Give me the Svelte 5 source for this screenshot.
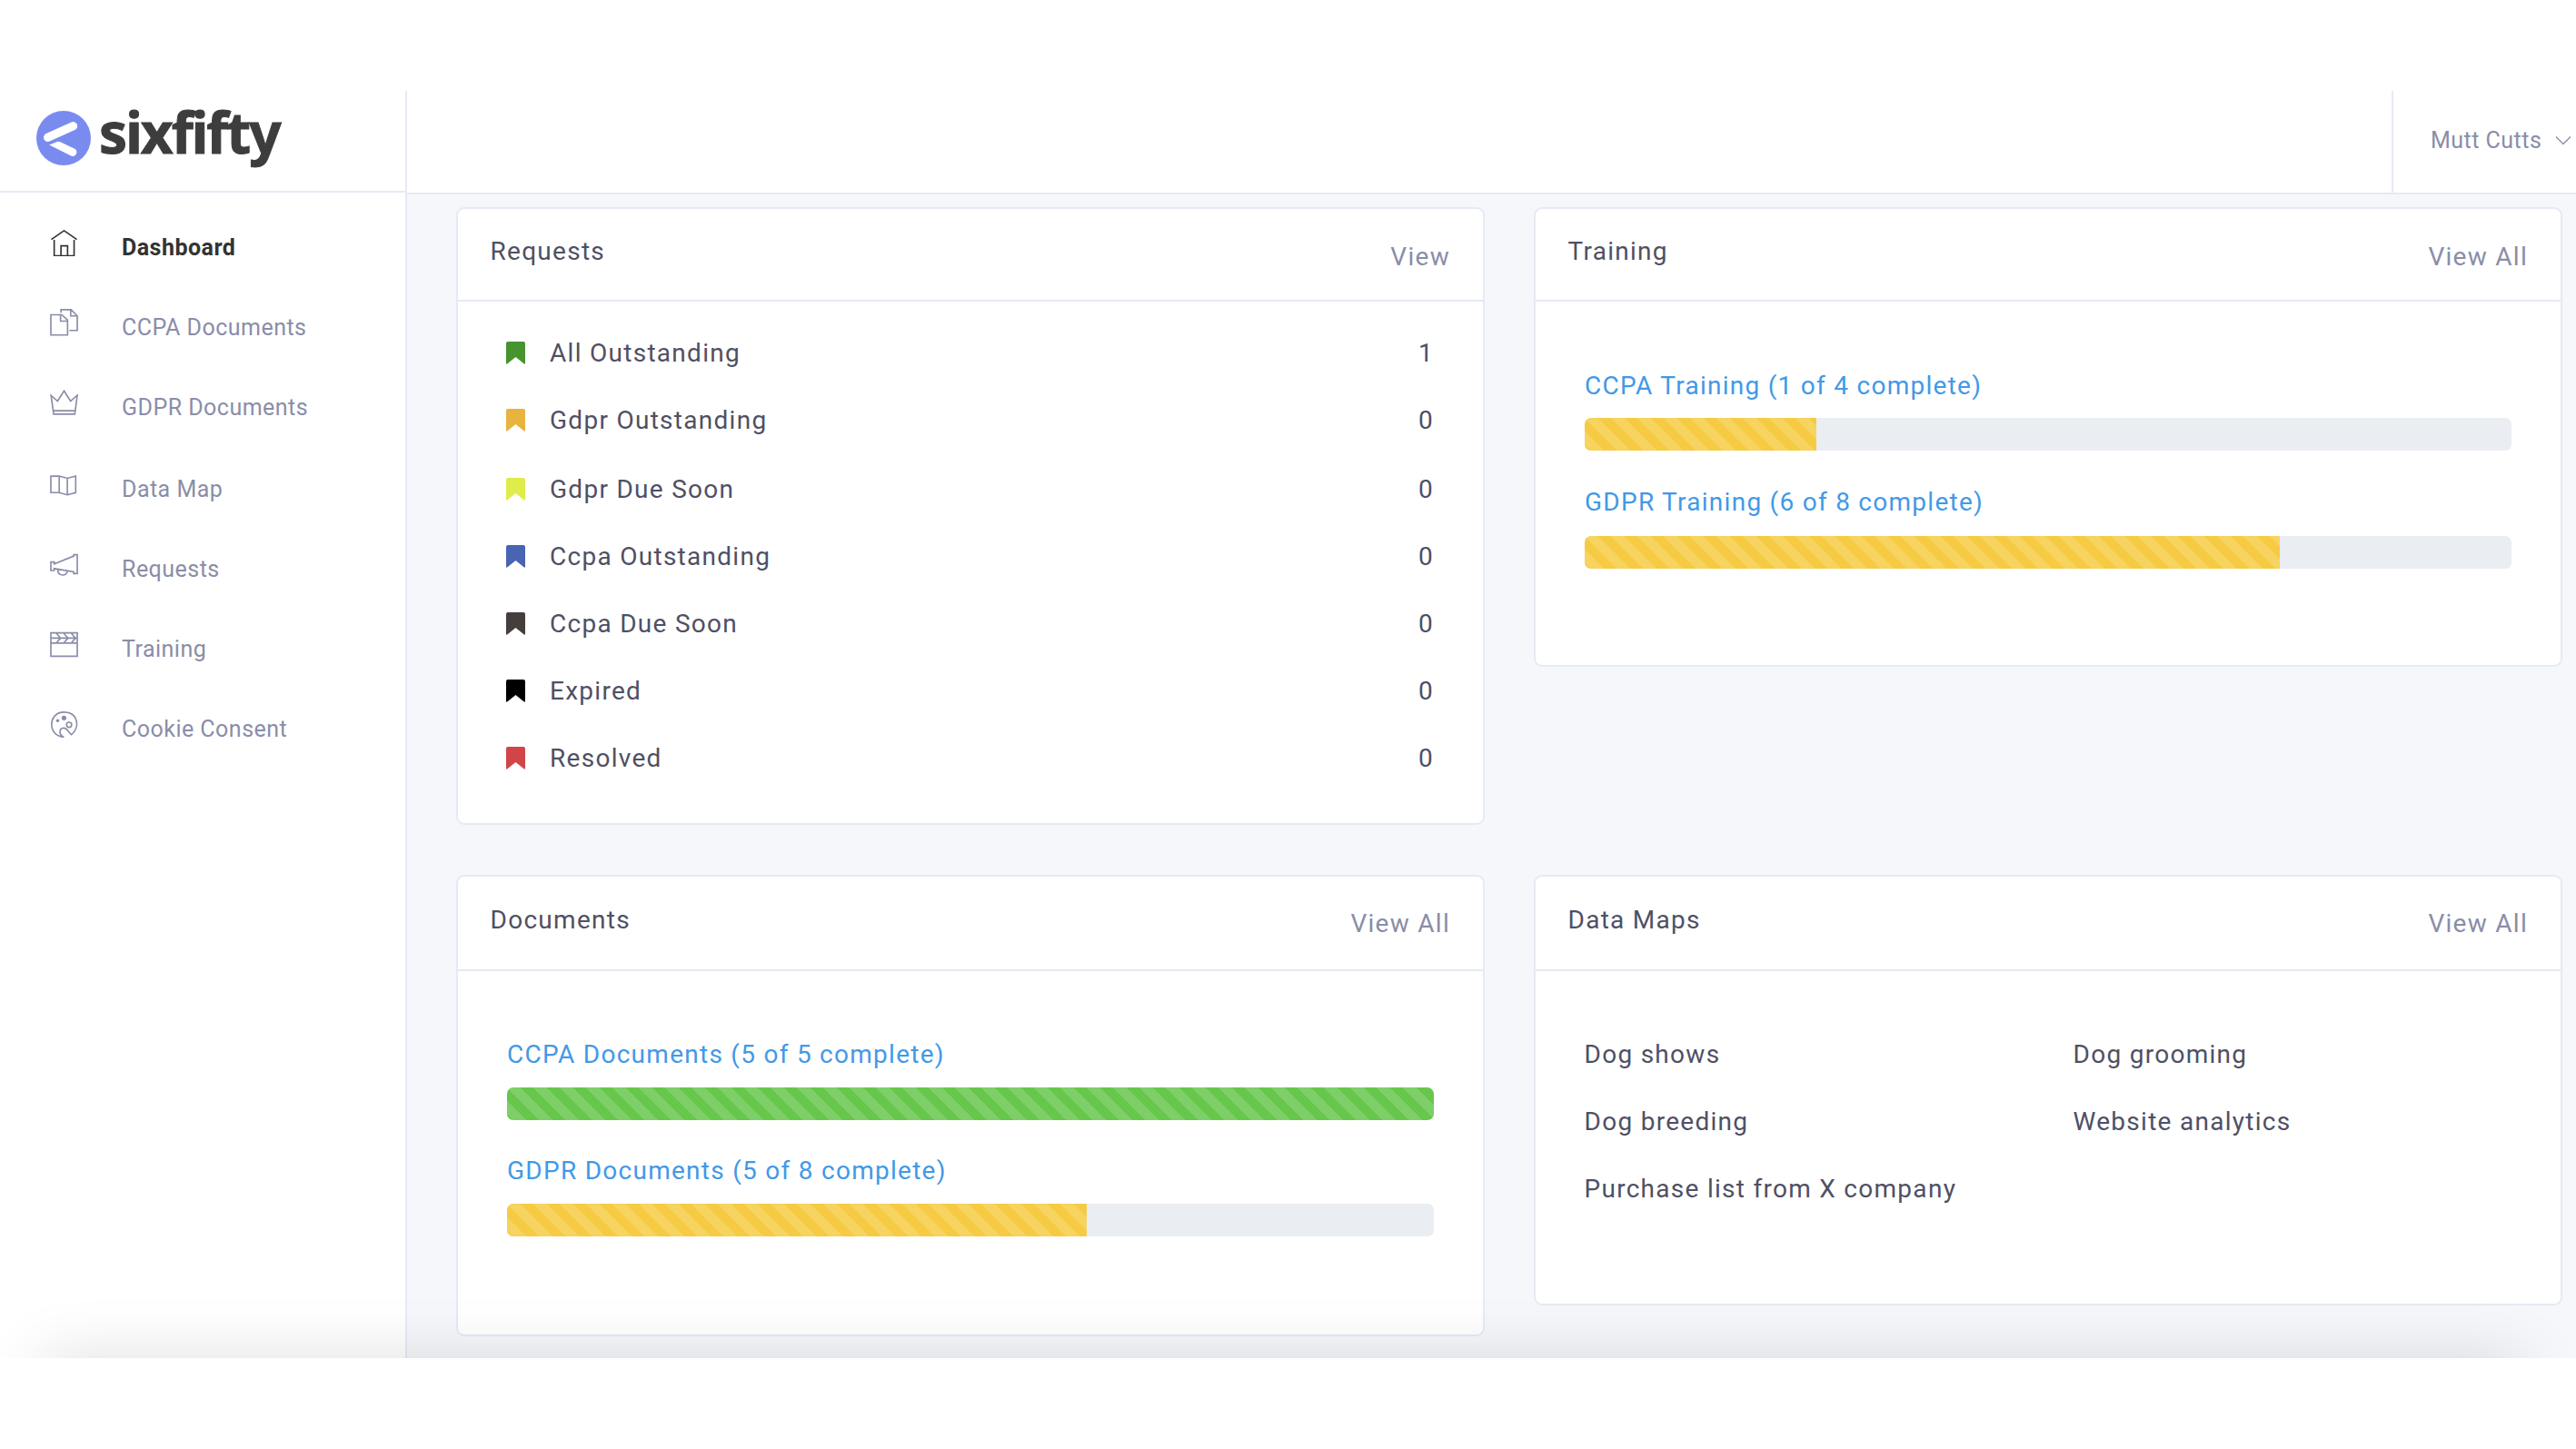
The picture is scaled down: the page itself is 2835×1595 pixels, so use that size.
<script>
  const nav = [
    { id: 'home', label: 'Dashboard', active: true },
    { id: 'docs', label: 'CCPA Documents' },
    { id: 'crown', label: 'GDPR Documents' },
    { id: 'map', label: 'Data Map' },
    { id: 'horn', label: 'Requests' },
    { id: 'clap', label: 'Training' },
    { id: 'palette', label: 'Cookie Consent' }
  ];
  const requests = [
    { label: 'All Outstanding', n: 1, color: '#47932f' },
    { label: 'Gdpr Outstanding', n: 0, color: '#e8b33f' },
    { label: 'Gdpr Due Soon', n: 0, color: '#e0ec4b' },
    { label: 'Ccpa Outstanding', n: 0, color: '#4864b2' },
    { label: 'Ccpa Due Soon', n: 0, color: '#443e3d' },
    { label: 'Expired', n: 0, color: '#000000' },
    { label: 'Resolved', n: 0, color: '#d24547' }
  ];
  const training = [
    { label: 'CCPA Training (1 of 4 complete)', pct: 25 },
    { label: 'GDPR Training (6 of 8 complete)', pct: 75 }
  ];
  const documents = [
    { label: 'CCPA Documents (5 of 5 complete)', pct: 100 },
    { label: 'GDPR Documents (5 of 8 complete)', pct: 62.5 }
  ];
  const maps = ['Dog shows', 'Dog grooming', 'Dog breeding', 'Website analytics', 'Purchase list from X company'];
</script>

{#snippet head(title, link)}
  <header class="card-head"><h2>{title}</h2><a class="view">{link}</a></header>
{/snippet}

{#snippet bars(items)}
  <div class="bars">
    {#each items as b}
      <a class="bar-label">{b.label}</a>
      <div class="track"><div class="fill" class:done={b.pct === 100} style:width="{b.pct}%"></div></div>
    {/each}
  </div>
{/snippet}

<div class="app">
  <aside>
    <div class="brand">
      <svg class="mark" viewBox="0 0 60 60">
        <circle cx="30" cy="30" r="30" fill="#7a8bf0" />
        <path d="M12.700 29.300 40.500 16.800" stroke="#fff" stroke-width="9.400" stroke-linecap="round" />
        <path d="M14.200 37.500 23 34q1.400-.6 2.800 0l15.900 7.400a4.300 4.300 0 0 1-3.600 8.200z" fill="#fff" />
      </svg>
      <span class="word">sixfifty</span>
    </div>
    <nav>
      {#each nav as item}
        <a class="item {item.id}" class:active={item.active}>
          <svg class="icon" viewBox="0 0 32 32">
            {#if item.id === 'home'}
              <path d="M1.500 13 16 3l14.500 10M4.800 13.500v18h22.600v-18M12.500 31.500V20.200h7.500v11.300" />
            {:else if item.id === 'docs'}
              <path d="M1 7.700h12.500l6.500 6v17H1zM12 8v7h8M12.500 5.500V2H24l7 7v16.500h-9M23.500 2.500V9H31" />
            {:else if item.id === 'crown'}
              <path d="M1.200 8.500 4.200 29.800h24L31 8.500 23.400 15 16 3.300 8.600 15zM3.700 26h25" />
            {:else if item.id === 'map'}
              <path d="M1 7.300h9.500l9.200 2.500 9.500-2.500v18.800l-9.500 2.500-9.200-2.500H1zM10.500 7.300v18.800M19.700 9.800v18.800" />
            {:else if item.id === 'horn'}
              <path d="M1 14h3.800v2.300L27 7.300V5.800h4v21.400h-4v-2L4.800 21.500v2.200H1zM8.800 22.500c0 8 10.400 8.500 10.800 1.800" />
            {:else if item.id === 'clap'}
              <path d="M1 3.800h30v26.500H1zM1 9.700h30M1 15.400h30M7 3.800l5 5.900-5 5.700M15.500 3.800l5 5.900-5 5.700M24 3.800l5 5.900-5 5.700" />
            {:else}
              <path d="M15.800 31.300C-2.800 30.800-2.800 3 16 3c16 0 18.600 17.500 8.300 25.500-3.300-2.500-4.300-7.500-9-7.500-5.300 0-5.300 8.300.5 10.300z" />
              <circle cx="21.700" cy="17.400" r="2.900" />
              <circle cx="15.900" cy="9.600" r="2.700" class="dot" />
              <circle cx="8.700" cy="12.600" r="1.800" class="dot" />
            {/if}
          </svg>
          <span>{item.label}</span>
        </a>
      {/each}
    </nav>
  </aside>

  <div class="main">
    <div class="topbar">
      <div class="user">
        <span>Mutt Cutts</span>
        <svg class="chev" viewBox="0 0 18 11"><path d="M1 1.500 9 9.500l8-8" /></svg>
      </div>
    </div>
    <div class="content">
      <section class="card requests">
        {@render head('Requests', 'View')}
        <ul>
          {#each requests as r}
            <li>
              <svg class="flag" viewBox="0 0 21 25">
                <path d="M2 0h17q2 0 2 2v21.500q0 2-1.800.6L10.500 17 1.800 24.100Q0 25.500 0 23.500V2Q0 0 2 0z" fill={r.color} />
              </svg>
              <span class="name">{r.label}</span>
              <span>{r.n}</span>
            </li>
          {/each}
        </ul>
      </section>
      <section class="card training">
        {@render head('Training', 'View All')}
        {@render bars(training)}
      </section>
      <section class="card documents">
        {@render head('Documents', 'View All')}
        {@render bars(documents)}
      </section>
      <section class="card datamaps">
        {@render head('Data Maps', 'View All')}
        <div class="maps">
          {#each maps as m}<span>{m}</span>{/each}
        </div>
      </section>
    </div>
  </div>
  <div class="fade"></div>
</div>

<style>
  :global(body) { background: #fff; }
  * { box-sizing: border-box; }
  .app {
    position: relative;
    display: flex;
    width: 2835px;
    height: 1395px;
    margin-top: 100px;
    overflow: hidden;
    font-family: Roboto, sans-serif;
    color: #4f5064;
  }
  aside { width: 448px; flex: none; border-right: 2px solid #e5eaf4; background: #fff; }
  .brand {
    display: flex;
    align-items: flex-start;
    height: 112px;
    padding: 22px 0 0 40px;
    border-bottom: 2px solid #e5eaf4;
  }
  .mark { width: 60px; height: 60px; flex: none; }
  .word {
    margin: -17px 0 0 9px;
    font: 700 62px/80px "Noto Sans", sans-serif;
    font-variant-ligatures: none;
    letter-spacing: -1.950px;
    color: #3d3d3d;
    -webkit-text-stroke: 1px #3d3d3d;
  }
  nav { display: flex; flex-direction: column; padding: 14px 0 0 55px; }
  .item {
    display: flex;
    align-items: center;
    height: 88px;
    font-size: 25px;
    letter-spacing: 0.480px;
    color: #8a8da8;
  }
  .item.map { margin-top: 2px; }
  .item span { padding-top: 4px; }
  .item.active { font-weight: 700; color: #333; }
  .icon { width: 31px; height: 31px; margin: -7px 48px 0 0; flex: none; }
  .icon path, .icon circle { fill: none; stroke: currentColor; stroke-width: 1.700; }
  .icon .dot { fill: currentColor; stroke: none; }
  .main { flex: 1; min-width: 0; background: #f5f7fb; }
  .topbar {
    display: flex;
    justify-content: flex-end;
    height: 114px;
    border-bottom: 2px solid #e5eaf4;
    background: #fff;
  }
  .user {
    display: flex;
    align-items: center;
    justify-content: space-between;
    width: 203px;
    padding: 0 5px 3px 41px;
    border-left: 2px solid #e5eaf4;
    font-size: 25px;
    letter-spacing: 0.480px;
    white-space: nowrap;
    color: #8a8da8;
  }
  .chev { width: 18px; height: 11px; flex: none; }
  .chev path { fill: none; stroke: #8a8da8; stroke-width: 1.300; }
  .content {
    display: grid;
    grid-template-columns: 1132px 1132px;
    grid-template-rows: 680px 508px;
    column-gap: 54px;
    row-gap: 55px;
    align-items: start;
    padding: 14px 0 0 54px;
  }
  .card { border: 2px solid #e5eaf4; border-radius: 9px; background: #fff; }
  .requests { height: 680px; }
  .training { height: 506px; }
  .documents { height: 508px; }
  .datamaps { height: 474px; }
  .card-head {
    display: flex;
    justify-content: space-between;
    height: 102px;
    padding: 27px 36px 0 35.500px;
    border-bottom: 2px solid #e5eaf4;
  }
  .documents .card-head, .datamaps .card-head { height: 104px; padding-top: 28px; }
  h2, .view { margin: 0; font-size: 28px; font-weight: 400; line-height: 40px; letter-spacing: 1.280px; }
  .view { padding-top: 6px; color: #8a8da8; }
  .documents .view, .datamaps .view { padding-top: 4px; }
  ul { display: flex; flex-direction: column; margin: 0; padding: 19px 54px 0 53px; list-style: none; }
  li {
    display: flex;
    align-items: center;
    height: 74px;
    font-size: 28px;
    letter-spacing: 1.280px;
  }
  li:nth-child(3) { margin-top: 2px; }
  .flag { width: 21px; height: 25px; margin: 0 27px 0 0; }
  .name { flex: 1; }
  .bars { display: flex; flex-direction: column; padding: 73px 54px 0; }
  .documents .bars { padding-top: 72px; }
  .bar-label { font-size: 28px; line-height: 40px; letter-spacing: 1.270px; color: #4299e6; }
  .track {
    height: 36px;
    margin: 15px 0 37px;
    overflow: hidden;
    border-radius: 7px;
    background: #eaedf2;
  }
  .documents .track { margin: 16px 0 36px; }
  .training .track:last-child { margin-top: 17px; }
  .fill {
    height: 100%;
    background-color: #f6cb43;
    background-image: linear-gradient(45deg, rgba(255,255,255,.15) 25%, transparent 25%, transparent 50%, rgba(255,255,255,.15) 50%, rgba(255,255,255,.15) 75%, transparent 75%, transparent);
    background-size: 29px 29px;
  }
  .fill.done { background-color: #67c74c; }
  .maps {
    display: grid;
    grid-template-columns: 538px 1fr;
    row-gap: 34px;
    padding: 72px 53px 0 53.500px;
    font-size: 28px;
    line-height: 40px;
    letter-spacing: 1.280px;
    white-space: nowrap;
  }
  .fade {
    position: absolute;
    left: 45px;
    right: 58px;
    bottom: -100px;
    height: 100px;
    box-shadow: 0 0 70px rgba(0,0,0,.13);
    pointer-events: none;
  }
</style>
